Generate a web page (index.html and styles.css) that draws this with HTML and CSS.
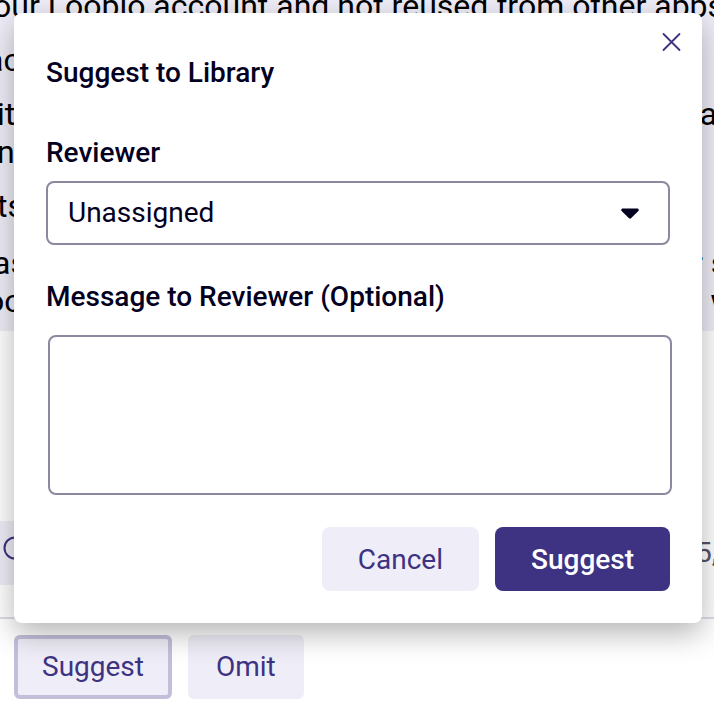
FILE: index.html
```
<!doctype html>
<html lang="en">
<head>
  <meta charset="utf-8">
  <meta content="width=device-width, initial-scale=1" name="viewport">
  <title>Suggest to Library</title>
  <link rel="stylesheet" href="styles.css">
</head>
<body>
  <main class="page">
    <section class="answer">
      <p class="line shift">our Loopio account and not reused from other apps.</p>
      <p class="line hang">ac</p>
      <div>
        <p class="line"><span>it</span><span class="line-end">ia</span></p>
        <p class="line">n</p>
      </div>
      <p class="line">ts</p>
      <div class="last">
        <p class="line shift"><span>as</span><span class="line-end">r s</span></p>
        <p class="line hang"><span>oc</span><span class="line-end">t w</span></p>
      </div>
    </section>

    <div class="toolbar">
      <button type="button" class="tool" aria-label="Search">
        <svg width="28" height="34" viewBox="0 0 28 34" fill="none" stroke="currentColor" stroke-width="2">
          <circle cx="12" cy="12" r="10.5"/>
          <path d="M20 20l7 7"/>
        </svg>
      </button>
      <span class="count">5,</span>
    </div>

    <div class="actions">
      <button type="button" class="btn active">Suggest</button>
      <button type="button" class="btn">Omit</button>
    </div>
  </main>

  <form class="modal" role="dialog" aria-labelledby="modal_title">
    <button type="button" class="close" aria-label="Close">
      <svg width="20" height="20" viewBox="0 0 20 20" fill="none" stroke="currentColor" stroke-width="1.8" stroke-linecap="round">
        <path d="M1.5 2l16 16M17.5 2l-16 16"/>
      </svg>
    </button>
    <h1 id="modal_title">Suggest to Library</h1>

    <label for="reviewer">Reviewer</label>
    <div class="select">
      <select id="reviewer">
        <option>Unassigned</option>
      </select>
      <svg class="caret" width="18" height="12" viewBox="0 0 18 12" fill="currentColor">
        <path d="M1.2 0.5h15.6q1.6 1 .6 2.4L10 10.2q-1 .9-2 0L.6 2.9Q-.4 1.5 1.2.5z"/>
      </svg>
    </div>

    <label for="message">Message to Reviewer (Optional)</label>
    <textarea id="message"></textarea>

    <div class="buttons">
      <button type="button" class="btn wide">Cancel</button>
      <button type="submit" class="btn wide primary">Suggest</button>
    </div>
  </form>
</body>
</html>
```
FILE: styles.css
```
* {
  box-sizing: border-box;
  margin: 0; padding: 0;
}
html, body {
  height: 100%;
  overflow: hidden;
}
body {
  position: relative;
  background: #fff;
  color: #03001f;
  font-family: Roboto, Arial, sans-serif;
  font-size: 28px;
  line-height: 32px;
}
button, select, textarea {
  font: inherit;
  color: inherit;
}
svg {
  display: block;
}

/* Answer behind the dialog */
.answer {
  display: flex;
  flex-direction: column;
  gap: 16px;
  margin-top: -13px;
  padding-bottom: 11px;
  background: #efedf7;
  color: #000;
  font-size: 32px;
  line-height: 38px;
}
.line {
  display: flex;
  justify-content: space-between;
  margin-left: -3px;
  white-space: nowrap;
}
.line.shift {
  margin-left: -7px;
}
.line.hang {
  margin-left: -14px;
}
.line-end {
  width: 22px;
}
.last {
  padding-top: 3px;
}

.toolbar {
  display: flex;
  justify-content: space-between;
  align-items: center;
  margin-top: 158px;
  padding: 32px 0;
  border-bottom: 2px solid #dddbe8;
}
.tool {
  display: flex;
  align-items: center;
  height: 64px;
  padding: 0 24px 0 3px;
  border: 0;
  background: #efedf7;
  color: #3d3382;
}
.count {
  width: 18px;
  color: #55516a;
}
.actions {
  display: flex;
  gap: 16px;
  padding: 16px 14px;
}

.btn {
  height: 64px;
  padding: 0 28px;
  border: 0;
  border-radius: 6px;
  background: #efedf7;
  color: #3d3382;
}
.btn.active {
  box-shadow: inset 0 0 0 4px #c3bfdb;
}
.btn.wide {
  padding: 2px 36px 0;
  border-radius: 8px;
}
.btn.primary {
  background: #3d3382;
  color: #fff;
  font-weight: 500;
}

/* Dialog */
.modal {
  position: absolute;
  top: 13px; left: 14px; right: 12px;
  padding: 44px 32px 32px;
  border-radius: 8px;
  background: #fff;
  box-shadow: 0 10px 30px rgba(0,0,0,0.3);
}
.modal h1 {
  margin-bottom: 48px;
  font-size: 28px;
  font-weight: 500;
}
.modal label {
  display: block;
  font-weight: 500;
}
.close {
  position: absolute;
  top: 19px; right: 20px;
  border: 0;
  background: none;
  color: #3d3382;
}
.select {
  position: relative;
  margin: 12px 0 36px;
}
.select select {
  display: block;
  width: 100%;
  height: 64px;
  padding: 0 60px 0 20px;
  border: 2px solid #8c889f;
  border-radius: 8px;
  background: #fff;
  appearance: none;
}
.caret {
  position: absolute;
  top: 27px; right: 31px;
  pointer-events: none;
}
textarea {
  display: block;
  width: 100%;
  height: 160px;
  margin: 22px 0 32px 2px;
  padding: 16px 20px;
  border: 2px solid #8c889f;
  border-radius: 8px;
  background: #fff;
  resize: none;
}
.buttons {
  display: flex;
  justify-content: flex-end;
  gap: 16px;
}
```
